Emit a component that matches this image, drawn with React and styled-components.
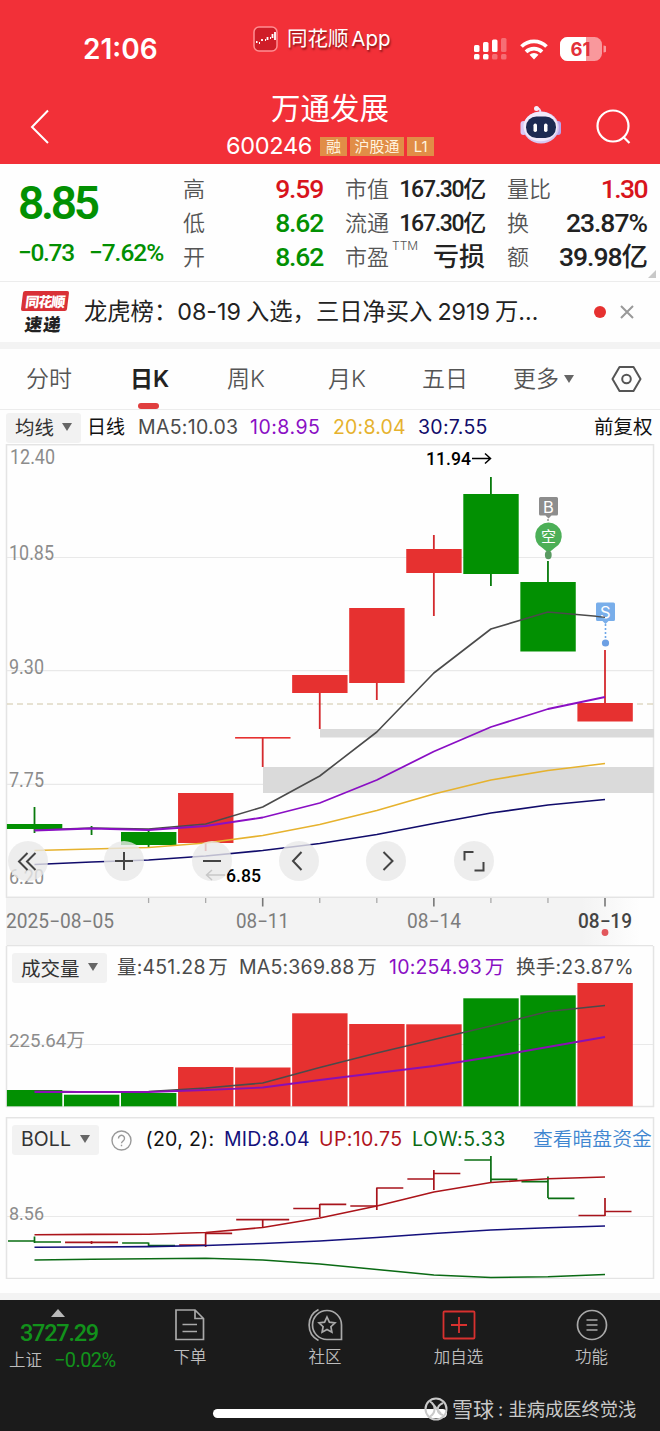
import React, { useState } from 'react';
import styled, { createGlobalStyle } from 'styled-components';

const RED = '#e63130';
const GREEN = '#029002';
const DARK = '#4b4b4b';
const PURPLE = '#8a0fc4';
const YELLOW = '#e6b22e';
const NAVY = '#110c6b';

const sans = `Inter, "Noto Sans CJK SC", sans-serif`;
const din = `Roboto, "Noto Sans CJK SC", sans-serif`;

const GlobalStyle = createGlobalStyle`
  * { box-sizing: border-box; }
  body { margin: 0; background: #fefefe; }
  svg { display: block; flex: none; }
`;

const Page = styled.div`
  width: 660px;
  height: 1431px;
  overflow: hidden;
  display: flex;
  flex-direction: column;
  background: #fefefe;
  font-family: ${sans};
  color: #222;
  white-space: nowrap;
`;

// text run: $n uses the condensed number face, $ls tunes tracking
const Text = styled.span`
  font-family: ${p => (p.$n ? din : sans)};
  font-size: ${p => p.$size || 22}px;
  font-weight: ${p => p.$weight || 400};
  letter-spacing: ${p => p.$ls || 0}px;
  word-spacing: ${p => p.$ws || 0}px;
  color: ${p => p.$color || 'inherit'};
  line-height: 1;
  flex: none;
`;

const Slot = styled.div`
  width: ${p => p.$w}px;
  flex: none;
  display: flex;
  align-items: center;
`;

/* ---------- header ---------- */
const Header = styled.header`
  height: 164px;
  flex: none;
  background: #f23038;
  color: #fff;
`;

const StatusBar = styled.div`
  height: 80px;
  padding: 18px 54px 0 83px;
  display: flex;
  align-items: center;
`;

const AppName = styled.div`
  display: flex;
  align-items: center;
  width: 304px;
  margin: -20px 0 0 12px;
  gap: 9px;
  text-shadow: 1px 2px 2px rgba(60, 0, 0, 0.6);
`;

const StatusIcons = styled.div`
  display: flex;
  align-items: center;
  gap: 12px;
`;

const NavBar = styled.div`
  height: 84px;
  padding: 9px 30px 0 30px;
  display: grid;
  grid-template-columns: 190px 1fr 76px 34px;
`;

const NavIcon = styled.div`
  padding-top: ${p => p.$top}px;
`;

const TitleBlock = styled.div`
  display: flex;
  flex-direction: column;
  align-items: center;
  padding-right: 80px;
`;

const TitleLine = styled.div`
  height: 40px;
  display: flex;
  align-items: center;
`;

const CodeLine = styled.div`
  height: 34px;
  display: flex;
  align-items: center;
  gap: 3px;
`;

const Tag = styled.span`
  width: ${p => p.$w}px;
  height: 19px;
  margin-left: ${p => p.$ml || 0}px;
  flex: none;
  display: flex;
  align-items: center;
  justify-content: center;
  background: #e18d47;
  color: #fff3df;
  font-size: 15px;
  line-height: 1;
`;

/* ---------- quote ---------- */
const Quote = styled.section`
  height: 118px;
  flex: none;
  padding: 8px 4px 0 18px;
  display: grid;
  grid-template-columns: 165px 140px 22px 140px 22px 140px 1fr;
  border-bottom: 1px solid #ececec;
`;

const Price = styled.div`
  height: 62px;
  display: flex;
  align-items: center;
  color: ${GREEN};
`;

const Change = styled.div`
  height: 38px;
  display: flex;
  align-items: center;
  gap: 15px;
  color: ${GREEN};
`;

const Row = styled.div`
  height: 34px;
  display: flex;
  align-items: center;
  justify-content: space-between;
`;

const Label = styled.span`
  display: flex;
  font-size: 22px;
  line-height: 1;
  font-weight: 350;
  color: #555;

  sup {
    margin: -6px 0 0 3px;
    font-size: 12px;
    line-height: 1;
  }
`;

const Corner = styled.div`
  align-self: end;
  justify-self: end;
  margin-bottom: 3px;
  border: solid transparent;
  border-width: 0 0 8px 8px;
  border-bottom-color: #c8c8c8;
`;

const Fill = styled.div`
  flex: none;
  height: ${p => p.$h}px;
  background: ${p => p.$bg || '#f3f3f3'};
`;

/* ---------- news ---------- */
const News = styled.section`
  height: 60px;
  flex: none;
  display: flex;
  align-items: center;
  padding-left: 20px;
`;

const NewsLogo = styled.div`
  width: 64px;
  display: flex;
  flex-direction: column;
  align-items: flex-start;
`;

const LogoTop = styled.div`
  width: 46px;
  height: 20px;
  margin-left: 2px;
  display: flex;
  align-items: center;
  justify-content: center;
  transform: skewX(-7deg);
  border-radius: 2px;
  background: #d93137;
  color: #fff;
  font-size: 14px;
  font-weight: 900;
  letter-spacing: -1px;
`;

const LogoBottom = styled.div`
  height: 20px;
  margin: 2px 0 0 5px;
  display: flex;
  align-items: center;
  transform: skewX(-7deg);
  color: #222;
  font-size: 17.5px;
  font-weight: 900;
  letter-spacing: 1px;
`;

const Dot = styled.i`
  width: ${p => p.$d}px;
  height: ${p => p.$d}px;
  flex: none;
  border-radius: 50%;
  background: ${p => p.$bg || RED};
`;

/* ---------- tabs ---------- */
const Tabs = styled.nav`
  height: 61px;
  flex: none;
  padding-left: 26px;
  display: grid;
  grid-template-columns: 104px 97px 101px 94px 91px 98px 1fr;
  border-bottom: 1px solid #ececec;
`;

const Tab = styled.div`
  display: flex;
  align-items: center;
  gap: 5px;
  font-size: 23px;
  font-weight: ${p => (p.$on ? 600 : 350)};
  color: ${p => (p.$on ? '#222' : '#555')};
  cursor: pointer;
`;

const TabInner = styled.div`
  position: relative;
  line-height: 61px;
  height: 60px;
`;

const Underline = styled.i`
  position: absolute;
  left: 8px;
  bottom: 0;
  width: 21px;
  height: 6px;
  border-radius: 3px;
  background: #e03e3e;
`;

const Caret = styled.i`
  border: solid transparent;
  border-width: 8px 5.5px 0;
  border-top-color: #666;
`;

const Legend = styled.div`
  height: 34px;
  flex: none;
  display: flex;
  align-items: center;
  padding: 1px 0 0 6px;
`;

const Picker = styled.button`
  width: ${p => p.$w}px;
  height: 30px;
  margin-right: ${p => p.$mr}px;
  padding: 0 9px 2px;
  flex: none;
  display: flex;
  align-items: center;
  justify-content: space-between;
  border: 0;
  border-radius: 3px;
  background: #f2f2f2;
  color: #333;
  font: 400 ${p => p.$size || 19.5}px ${sans};
  letter-spacing: ${p => p.$ls || 0}px;
  white-space: nowrap;
`;

/* ---------- charts ---------- */
const ChartBox = styled.div`
  position: relative;
  height: 454px;
  flex: none;
`;

const Controls = styled.div`
  position: absolute;
  left: 8px;
  top: 397px;
  display: grid;
  grid-template-columns: 96px 87.5px 87.5px 87px 87.5px 40px;
`;

const Round = styled.button`
  width: 40px;
  height: 40px;
  padding: 0;
  border: 0;
  border-radius: 50%;
  background: rgba(232, 232, 232, 0.8);
`;

const Axis = styled.div`
  height: 48px;
  flex: none;
  margin-left: 6px;
  background: linear-gradient(90deg, #f3f3f3 88%, #fefefe 97%);
`;

const Panel = styled.div`
  position: relative;
  height: 162px;
  flex: none;
`;

const PanelHead = styled.div`
  position: absolute;
  left: 12px;
  right: 0;
  top: ${p => p.$top}px;
  height: 30px;
  display: flex;
  align-items: center;
`;

/* ---------- footer ---------- */
const Footer = styled.footer`
  height: 131px;
  flex: none;
  background: #1b1b1b;
  color: #bdbdbd;
`;

const FooterTabs = styled.div`
  height: 84px;
  display: grid;
  grid-template-columns: 124px 132px 138px 129px 137px;
`;

const Index = styled.div`
  display: flex;
  flex-direction: column;
  padding: 9px 0 0 9px;
`;

const UpArrow = styled.i`
  margin-left: 42px;
  width: 0;
  border: solid transparent;
  border-width: 0 7.5px 8px;
  border-bottom-color: #b9b9b9;
`;

const IndexLine = styled.div`
  height: ${p => p.$h}px;
  padding-left: ${p => p.$pl || 0}px;
  display: flex;
  align-items: center;
  gap: 12px;
`;

const FooterItem = styled.div`
  display: flex;
  flex-direction: column;
  align-items: center;
  padding-top: 8px;
  gap: 6px;
  font-size: 16.5px;
  font-weight: 350;
  line-height: 18px;
`;

const Bottom = styled.div`
  height: 47px;
  display: flex;
  align-items: center;
  padding: 3px 0 0 213px;
`;

const HomeBar = styled.div`
  width: 234px;
  height: 9px;
  margin-top: 9px;
  flex: none;
  border-radius: 5px;
  background: #fff;
`;

const Watermark = styled.div`
  display: flex;
  align-items: center;
  margin-left: -23px;
  gap: 4px;
  color: #c9c9c9;
`;

/* ---------- data ---------- */
const X = Array.from({ length: 11 }, (_, i) => 34.5 + i * 57.05);

// top, bottom, high, low (chart y)
const candles = [
  [824, 829, 807, 833, 0],
  [828, 829, 826, 835, 0],
  [832, 845, 830, 847, 0],
  [793, 843, 793, 851, 1],
  [737, 738.6, 738, 767, 1],
  [675, 693, 675, 729, 1],
  [608, 683, 608, 700, 1],
  [549, 573, 535, 616, 1],
  [494, 574, 477, 586, 0],
  [582, 651.5, 561, 651, 0],
  [703, 721.5, 650, 721, 1],
];

const ma5 = [830, 828, 829, 824, 807, 776, 732, 673, 629, 612, 617];
const ma10 = [830.5, 828.5, 830, 826, 817.5, 803, 780, 751.5, 727, 709, 697];
const ma20 = [850.5, 849, 847.5, 843, 835.5, 824.5, 810.5, 794, 780, 770.5, 763.5];
const ma30 = [864.5, 862, 860, 856, 850.5, 843.5, 834.5, 823.5, 813, 805, 799.5];

const volume = [1090, 1094.7, 1093, 1067, 1067.5, 1013.3, 1024, 1024.3, 998.3, 995.3, 983];
const vma5 = [1091, 1092, 1091.5, 1088, 1083, 1067.5, 1053, 1039.5, 1026, 1011.5, 1005.5];
const vma10 = [1092, 1092, 1092, 1090, 1087.5, 1080, 1073, 1066, 1057, 1047, 1037];

// open, close, high, low
const bars = [
  [1241, 1242, 1236.5, 1243, 0],
  [1242.3, 1242.3, 1241, 1244, 1],
  [1243, 1245.5, 1242.5, 1246, 0],
  [1245, 1233.3, 1233, 1247, 1],
  [1219.7, 1219.7, 1219, 1227, 1],
  [1208.5, 1204.3, 1204, 1217, 1],
  [1206, 1188, 1187.5, 1210, 1],
  [1179, 1173.5, 1170, 1190, 1],
  [1160, 1179.3, 1156, 1182, 0],
  [1181.7, 1198.3, 1176.5, 1198, 0],
  [1215.5, 1211.5, 1198, 1216, 1],
];
const up = [1234.7, 1234.4, 1234.2, 1232.5, 1227.5, 1218, 1206, 1192, 1182.5, 1178.7, 1177];
const mid = [1247.3, 1247, 1246.6, 1245.5, 1243.5, 1241, 1237.5, 1233.5, 1230, 1227.7, 1226];
const low = [1260, 1259.2, 1258.8, 1258.3, 1260, 1264, 1269.5, 1275, 1277.5, 1276.8, 1274.5];

const pts = (ys) => ys.map((y, i) => `${X[i]},${y}`).join(' ');

const Line = ({ ys, color, w = 1.6 }) => (
  <polyline points={pts(ys)} fill="none" stroke={color} strokeWidth={w} strokeLinejoin="round" />
);

const Num = ({ x, y, w, size = 19, color = '#8c8c8c', weight = 400, children }) => (
  <text x={x} y={y} textLength={w} lengthAdjust="spacingAndGlyphs" fontFamily={din}
    fontSize={size} fontWeight={weight} fill={color}>{children}</text>
);

function KChart() {
  return (
    <ChartBox>
      <svg width="660" height="454" viewBox="0 444 660 454">
        <rect x="6.5" y="444.7" width="647" height="452.6" fill="none" stroke="#e4e4e4" strokeWidth="1.5" />
        {[557.5, 670.7, 784.3].map(y => <path key={y} d={`M7 ${y}H653`} stroke="#e9e9e9" strokeWidth="1.2" />)}
        <rect x="320" y="729" width="334" height="8.5" fill="#dadada" />
        <rect x="263" y="767" width="391" height="26" fill="#dadada" />
        <path d="M7 704H653" stroke="#cfc6a6" strokeWidth="1.2" strokeDasharray="6 4" />
        {candles.map(([t, b, h, l, isUp], i) => (
          <g key={i} fill={isUp ? RED : GREEN}>
            <rect x={X[i] - 0.9} y={h} width="1.8" height={l - h} fill={isUp ? '#d42a2e' : '#087a0c'} />
            {i !== 1 && <rect x={X[i] - 27.6} y={t} width="55.4" height={b - t} />}
          </g>
        ))}
        <Line ys={ma5} color={DARK} />
        <Line ys={ma10} color={PURPLE} w={1.8} />
        <Line ys={ma20} color={YELLOW} w={1.7} />
        <Line ys={ma30} color={NAVY} w={1.7} />
        <Num x={10} y={463.5} w={45} size={19.5}>12.40</Num>
        <Num x={9} y={560} w={45} size={19.5}>10.85</Num>
        <Num x={9} y={673.5} w={35} size={19.5}>9.30</Num>
        <Num x={9} y={787} w={35} size={19.5}>7.75</Num>
        <Num x={9} y={883.5} w={35} size={19.5}>6.20</Num>
        <Num x={426} y={465} w={45} weight={500} color="#000">11.94</Num>
        <path d="M472 458.5H490M485 453.5L490.500 458.500L485 463.500" fill="none" stroke="#000" strokeWidth="1.5" />
        <Num x={226} y={881.5} w={35} weight={500} color="#000">6.85</Num>
        <path d="M225 875H207M212 870L206.500 875L212 880" fill="none" stroke="#444" strokeWidth="1.5" />

        <path d="M548 515V552" stroke="#777" strokeWidth="1.2" strokeDasharray="2 2" />
        <path d="M540 497h16.500a1.500 1.500 0 0 1 1.500 1.500v15.500a1.500 1.500 0 0 1-1.500 1.500h-5l-3 3-3-3h-5a1.500 1.500 0 0 1-1.500-1.500v-15.500a1.500 1.500 0 0 1 1.500-1.500z" fill="#8d8d8d" />
        <text x="548.4" y="513" textAnchor="middle" fontFamily={sans} fontSize="16.5" fill="#fff">B</text>
        <path d="M548.500 522.500a13.500 13.500 0 0 1 6 25.500l-6 5-6-5a13.500 13.500 0 0 1 6-25.500z" fill="#4caf57" />
        <text x="548.4" y="541.5" textAnchor="middle" fontFamily={sans} fontSize="15" fill="#fff">空</text>
        <ellipse cx="548.3" cy="555" rx="3.4" ry="4.2" fill="#5a9a62" />

        <path d="M597 602.500h16.500a1.500 1.500 0 0 1 1.500 1.500v15.500a1.500 1.500 0 0 1-1.500 1.500h-5l-3 3-3-3h-5a1.500 1.500 0 0 1-1.500-1.500v-15.500a1.500 1.500 0 0 1 1.500-1.500z" fill="#6ea7e8" fillOpacity="0.92" />
        <text x="605.3" y="618" textAnchor="middle" fontFamily={sans} fontSize="16.5" fill="#fff">S</text>
        <path d="M605.500 624V639" stroke="#6ea7e8" strokeWidth="1.6" strokeDasharray="2 2" />
        <circle cx="605.5" cy="643" r="3.6" fill="#6ca0e4" />
        <path d="M596 616.300L605 617.300" stroke={DARK} strokeWidth="1.3" />
      </svg>
      <Controls>
        {[
          'M19.500 12L11 20.500L19.500 29M27.500 12L19 20.500L27.500 29',
          'M20 11V29M11 20H29',
          'M11 20H29',
          'M22.500 11L14 20L22.500 29',
          'M17.500 11L26.500 20L17.500 29',
          'M10.500 19.500V11H19.500M20.500 29.500H29.500V21',
        ].map((d, i) => (
          <Round key={i}>
            <svg width="40" height="40" fill="none" stroke="#444" strokeWidth="2"><path d={d} /></svg>
          </Round>
        ))}
      </Controls>
    </ChartBox>
  );
}

function TimeAxis() {
  return (
    <Axis>
      <svg width="654" height="48" viewBox="6 898 654 48">
        <path d="M7 945.500H653" stroke="#e4e4e4" />
        {[2, 3, 5, 6, 8, 9].map(i => <path key={i} d={`M${X[i]} 898v5`} stroke="#aaa" strokeWidth="1.3" />)}
        {[4, 7, 10].map(i => <path key={i} d={`M${X[i]} 898v8.500`} stroke="#777" strokeWidth="1.6" />)}
        <Num x={6} y={927.500} w={108} size={19.500} color="#7c7c7c">2025−08−05</Num>
        <Num x={236} y={927.500} w={53} size={19.500} color="#7c7c7c">08−11</Num>
        <Num x={407} y={927.500} w={54} size={19.500} color="#7c7c7c">08−14</Num>
        <Num x={578} y={927.500} w={54} size={19.500} weight={500} color="#444">08−19</Num>
        <circle cx="605" cy="932.5" r="3.4" fill="#e2575c" />
      </svg>
    </Axis>
  );
}

function VolumePanel() {
  return (
    <Panel>
      <svg width="660" height="162" viewBox="0 946 660 162">
        <rect x="6.500" y="945.500" width="647" height="161" fill="none" stroke="#e4e4e4" strokeWidth="1.5" />
        <path d="M7 1044.500H653" stroke="#e9e9e9" />
        {volume.map((y, i) => (
          <rect key={i} x={X[i] - 27.600} y={y} width="55.400" height={1106.300 - y} fill={candles[i][4] ? RED : GREEN} />
        ))}
        <Line ys={vma5} color={DARK} />
        <Line ys={vma10} color="#8a0fb4" w={1.800} />
        <Num x={9} y={1047} w={76}>225.64万</Num>
      </svg>
      <PanelHead $top={7}>
        <Picker $w={95} $mr={10}>成交量<Caret /></Picker>
        <Slot $w={122}><Text $size={19.500} $ws={-3} $ls={0.200} $color={DARK}>量:451.28 万</Text></Slot>
        <Slot $w={150}><Text $size={19.500} $ws={-3} $ls={0.200} $color={DARK}>MA5:369.88 万</Text></Slot>
        <Slot $w={127}><Text $size={19.500} $ws={-3} $ls={0.200} $color={PURPLE}>10:254.93 万</Text></Slot>
        <Text $size={19.500} $ls={0.250} $color={DARK}>换手:23.87%</Text>
      </PanelHead>
    </Panel>
  );
}

function BollPanel() {
  return (
    <Panel>
      <svg width="660" height="162" viewBox="0 1117 660 162">
        <rect x="6.500" y="1117.700" width="647" height="160.800" fill="none" stroke="#e4e4e4" strokeWidth="1.500" />
        <path d="M7 1216.500H653" stroke="#e9e9e9" />
        {bars.map(([o, c, h, l, isUp], i) => (
          <path key={i} d={`M${X[i] - 26.500} ${o}H${X[i]}M${X[i]} ${h}V${l}M${X[i]} ${c}H${X[i] + 26.500}`}
            fill="none" stroke={isUp ? '#a8141c' : '#0a6e12'} strokeWidth="1.7" />
        ))}
        <Line ys={up} color="#ab141a" />
        <Line ys={mid} color="#14107c" />
        <Line ys={low} color="#0a6a14" />
        <Num x={9} y={1219.500} w={35}>8.56</Num>
      </svg>
      <PanelHead $top={8}>
        <Picker $w={87} $mr={12} $size={19.500} $ls={0.100}>BOLL<Caret /></Picker>
        <Slot $w={34.500}>
          <svg width="21" height="21" fill="none" stroke="#999" strokeWidth="1.400">
            <circle cx="10.500" cy="10.500" r="9.500" />
            <path d="M7.500 8.400a3 3 0 1 1 4.700 2.400c-1.200.9-1.700 1.200-1.700 2.500M10.500 14.800v1.500" />
          </svg>
        </Slot>
        <Slot $w={78.500}><Text $size={19.500} $ls={0.300} $color="#111">(20, 2):</Text></Slot>
        <Slot $w={95}><Text $size={19.500} $ls={0.200} $color="#14107c">MID:8.04</Text></Slot>
        <Slot $w={93}><Text $size={19.500} $ls={0.400} $color="#b0141c">UP:10.75</Text></Slot>
        <Slot $w={121}><Text $size={19.500} $ls={0.500} $color="#0a6a14">LOW:5.33</Text></Slot>
        <Text $size={19.8} $weight={350} $color="#4086d0">查看暗盘资金</Text>
      </PanelHead>
    </Panel>
  );
}

function Head() {
  return (
    <Header>
      <StatusBar>
        <Slot $w={158}><Text $size={28} $weight={600}>21:06</Text></Slot>
        <AppName>
          <svg width="25" height="26" fill="none" stroke="#fff">
            <rect x="1" y="1" width="23" height="24" rx="5" fill="#cf1d28" stroke="#ff8f92" strokeWidth="1.500" />
            <path d="M3 16h1.500M6 17h1M9 13v2M12 14h1M14.500 11v3M17 12h1M19.500 8v4M22 6v8" strokeWidth="1.800" />
          </svg>
          <Text $size={20.500} $ws={-3}>同花顺 App</Text>
        </AppName>
        <StatusIcons>
          <svg width="34" height="22" fill="#fff">
            <rect x="0" y="7" width="5.500" height="7" rx="1.500" /><rect x="9" y="4" width="5.500" height="10" rx="1.500" />
            <rect x="18" y="1.500" width="5.500" height="12.500" rx="1.500" /><rect x="27" y="0" width="5.500" height="14" rx="1.500" opacity=".3" />
            <rect x="0" y="16" width="5.500" height="5.500" rx="1.500" /><rect x="9" y="16" width="5.500" height="5.500" rx="1.500" />
            <rect x="18" y="16" width="5.500" height="5.500" rx="1.500" opacity=".3" /><rect x="27" y="16" width="5.500" height="5.500" rx="1.500" opacity=".3" />
          </svg>
          <svg width="28" height="21" fill="none" stroke="#fff" strokeWidth="3.800">
            <path d="M1.500 7.500a18 18 0 0 1 25 0M6 12.800a11.500 11.500 0 0 1 16 0" />
            <path d="M14 20.500l-4.500-4.700a6.500 6.500 0 0 1 9 0z" fill="#fff" stroke="none" />
          </svg>
          <svg width="46" height="24">
            <rect width="42" height="24" rx="7.500" fill="#fff" opacity=".5" />
            <path d="M7.500 0H26V24H7.500A7.500 7.500 0 0 1 0 16.500V7.500A7.500 7.500 0 0 1 7.500 0z" fill="#fff" />
            <path d="M43.500 8.500a3.500 3.500 0 0 1 0 7z" fill="#fff" opacity=".5" />
            <text x="20.500" y="18.500" textAnchor="middle" fontFamily={sans} fontWeight="700" fontSize="18.500" fill="#e2303a">61</text>
          </svg>
        </StatusIcons>
      </StatusBar>
      <NavBar>
        <NavIcon $top={20}>
          <svg width="20" height="36" fill="none" stroke="#fff" strokeWidth="2"><path d="M18 1.500L2 18L18 34" /></svg>
        </NavIcon>
        <TitleBlock>
          <TitleLine><Text $size={29.500} $weight={400}>万通发展</Text></TitleLine>
          <CodeLine>
            <Text $size={23.500} $ls={-0.300}>600246</Text>
            <Tag $w={27} $ml={5}>融</Tag>
            <Tag $w={54}>沪股通</Tag>
            <Tag $w={27}>L1</Tag>
          </CodeLine>
        </TitleBlock>
        <NavIcon $top={16}>
          <svg width="42" height="40">
            <path d="M19 9C21 7 21 4 17 3" fill="none" stroke="#e9dcf6" strokeWidth="2" />
            <circle cx="16.500" cy="3.500" r="2.500" fill="#f7effb" />
            <rect x="0.500" y="16" width="6" height="14" rx="3" fill="#d9c9f5" />
            <rect x="35" y="16" width="6" height="14" rx="3" fill="#b9a4ec" />
            <ellipse cx="21" cy="22.500" rx="18" ry="16" fill="#d6c8f2" />
            <ellipse cx="20.500" cy="21.500" rx="17" ry="14.800" fill="#f1eafb" />
            <rect x="6" y="11.500" width="30" height="21.500" rx="10.500" fill="#1c2a52" />
            <rect x="13.500" y="18.500" width="3.500" height="8.500" rx="1.700" fill="#fff" />
            <rect x="24" y="18.500" width="3.500" height="8.500" rx="1.700" fill="#fff" />
          </svg>
        </NavIcon>
        <NavIcon $top={20}>
          <svg width="36" height="36" fill="none" stroke="#fff" strokeWidth="2.200">
            <circle cx="17" cy="17" r="15.500" /><path d="M27 27.500L33.500 34" />
          </svg>
        </NavIcon>
      </NavBar>
    </Header>
  );
}

function QuoteInfo() {
  return (
    <Quote>
      <div>
        <Price><Text $n $size={46} $weight={600} $ls={-3.300}>8.85</Text></Price>
        <Change>
          <Text $n $size={24.500} $weight={500} $ls={-1.300}>−0.73</Text>
          <Text $n $size={24.500} $weight={500} $ls={-1}>−7.62%</Text>
        </Change>
      </div>
      <div>
        <Row><Label>高</Label><Text $n $size={26.500} $weight={500} $ls={-1.200} $color="#d8141c">9.59</Text></Row>
        <Row><Label>低</Label><Text $n $size={26.500} $weight={500} $ls={-1.200} $color={GREEN}>8.62</Text></Row>
        <Row><Label>开</Label><Text $n $size={26.500} $weight={500} $ls={-1.200} $color={GREEN}>8.62</Text></Row>
      </div>
      <i />
      <div>
        <Row><Label>市值</Label><Text $n $size={23} $weight={500} $ls={-1.300}>167.30亿</Text></Row>
        <Row><Label>流通</Label><Text $n $size={23} $weight={500} $ls={-1.300}>167.30亿</Text></Row>
        <Row><Label>市盈<sup>TTM</sup></Label><Text $n $size={26} $weight={500}>亏损</Text></Row>
      </div>
      <i />
      <div>
        <Row><Label>量比</Label><Text $n $size={26.500} $weight={500} $ls={-1.600} $color="#d8141c">1.30</Text></Row>
        <Row><Label>换</Label><Text $n $size={26.500} $weight={500} $ls={-1}>23.87%</Text></Row>
        <Row><Label>额</Label><Text $n $size={26.500} $weight={500} $ls={-1}>39.98亿</Text></Row>
      </div>
      <Corner />
    </Quote>
  );
}

function App() {
  const [tab, setTab] = useState(1);
  return (
    <Page>
      <GlobalStyle />
      <Head />
      <QuoteInfo />
      <News>
        <NewsLogo>
          <LogoTop>同花顺</LogoTop>
          <LogoBottom>速递</LogoBottom>
        </NewsLogo>
        <Slot $w={510}><Text $size={23.300} $ws={-1.500}>龙虎榜：08-19 入选，三日净买入 2919 万…</Text></Slot>
        <Slot $w={26}><Dot $d={12} /></Slot>
        <svg width="14" height="14" fill="none" stroke="#999" strokeWidth="2"><path d="M1 1L13 13M13 1L1 13" /></svg>
      </News>
      <Fill $h={7} />
      <Tabs>
        {['分时', '日K', '周K', '月K', '五日', '更多'].map((name, i) => (
          <Tab key={name} $on={i === tab} onClick={() => setTab(i)}>
            <TabInner>{name}{i === tab && <Underline />}</TabInner>
            {name === '更多' && <Caret />}
          </Tab>
        ))}
        <Tab>
          <svg width="31" height="28" fill="none" stroke="#555" strokeWidth="2">
            <path d="M8.500 2H22.500L29.500 14L22.500 26H8.500L1.500 14Z" strokeLinejoin="round" />
            <circle cx="15.500" cy="14" r="4.300" />
          </svg>
        </Tab>
      </Tabs>
      <Legend>
        <Picker $w={75} $mr={6}>均线<Caret /></Picker>
        <Slot $w={51}><Text $size={19} $color="#111">日线</Text></Slot>
        <Slot $w={112}><Text $size={19.500} $ls={0.300} $color={DARK}>MA5:10.03</Text></Slot>
        <Slot $w={83}><Text $size={19.500} $ls={0.500} $color={PURPLE}>10:8.95</Text></Slot>
        <Slot $w={85}><Text $size={19.500} $ls={0.200} $color={YELLOW}>20:8.04</Text></Slot>
        <Slot $w={176}><Text $size={19.500} $ls={0.300} $color={NAVY}>30:7.55</Text></Slot>
        <Text $size={19.500} $color="#111">前复权</Text>
      </Legend>
      <KChart />
      <TimeAxis />
      <VolumePanel />
      <Fill $h={9} $bg="#fefefe" />
      <BollPanel />
      <Fill $h={14} $bg="#fefefe" />
      <Fill $h={7} />
      <Footer>
        <FooterTabs>
          <Index>
            <UpArrow />
            <IndexLine $h={34} $pl={11}><Text $n $size={23.500} $weight={500} $ls={-1.250} $color="#12921b">3727.29</Text></IndexLine>
            <IndexLine $h={18}>
              <Text $size={16.500} $weight={350}>上证</Text>
              <Text $n $size={20} $ls={-0.600} $color="#12921b">−0.02%</Text>
            </IndexLine>
          </Index>
          <FooterItem>
            <svg width="32" height="34" fill="none" stroke="#a9a9a9" strokeWidth="1.700">
              <path d="M2 2H21L29.500 10.500V31.500H2ZM21 2V10.500H29.500M8.500 16.500H23M8.500 23.500H23" />
            </svg>
            下单
          </FooterItem>
          <FooterItem>
            <svg width="36" height="34" fill="none" stroke="#a9a9a9" strokeWidth="1.700">
              <path d="M20 2.500A14.500 14.500 0 0 0 20 31.500H34.500V17A14.500 14.500 0 0 0 20 2.500ZM11.500 1.500A17.500 17.500 0 0 0 11.500 32.500" />
              <path d="M20 9l2.400 5.100 5.600.7-4.100 3.900 1 5.500-4.900-2.700-4.900 2.700 1-5.500-4.100-3.900 5.600-.7z" />
            </svg>
            社区
          </FooterItem>
          <FooterItem>
            <svg width="34" height="34" fill="none" stroke="#d8312f" strokeWidth="1.800">
              <rect x="1.500" y="3.500" width="31" height="27" rx="1" /><path d="M17 9V25M9 17H25" />
            </svg>
            加自选
          </FooterItem>
          <FooterItem>
            <svg width="34" height="34" fill="none" stroke="#a9a9a9" strokeWidth="1.700">
              <circle cx="17" cy="17" r="14.500" /><path d="M11.500 12H22.500M11.500 17H22.500M11.500 22H22.500" />
            </svg>
            功能
          </FooterItem>
        </FooterTabs>
        <Bottom>
          <HomeBar />
          <Watermark>
            <svg width="24" height="24" fill="none" stroke="#c9c9c9" strokeWidth="2">
              <circle cx="12" cy="12" r="10.500" />
              <path d="M6 4.500C12 8 12 16 6 19.500M19 6C12 9 12 16 19 18M8 6L17 17" />
            </svg>
            <Text $size={21}>雪球</Text>
            <Text $size={18.300}>: 韭病成医终觉浅</Text>
          </Watermark>
        </Bottom>
      </Footer>
    </Page>
  );
}

export default App;
